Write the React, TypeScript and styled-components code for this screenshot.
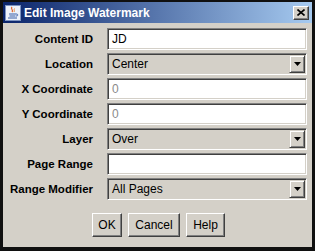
import React from 'react';
import styled, { createGlobalStyle } from 'styled-components';

const GlobalStyle = createGlobalStyle`
  html, body {
    margin: 0;
    padding: 0;
    background: #d4d0c8;
  }
  * { box-sizing: border-box; }
`

const Frame = styled.div`
  width: 315px;
  height: 251px;
  background: #d4d0c8;
  border-style: solid;
  border-color: #101010;
  border-width: 2px 3px 4px 3px;
  display: flex;
  flex-direction: column;
  font-family: "Liberation Sans", Arial, sans-serif;
`

const TitleBar = styled.div`
  height: 21px;
  display: flex;
  align-items: center;
  padding: 0 3px 0 2px;
  background: linear-gradient(to right, #0a246a, #a6caf0);
`

const TitleText = styled.span`
  flex: 1;
  margin-left: 3px;
  color: #fff;
  font-weight: bold;
  font-size: 12px;
`

const CloseButton = styled.div`
  width: 16px;
  height: 14px;
  background: #d4d0c8;
  border: 1px solid;
  border-color: #fff #404040 #404040 #fff;
  box-shadow: inset -1px -1px #808080;
  display: flex;
  align-items: center;
  justify-content: center;
`

const Form = styled.div`
  display: grid;
  grid-template-columns: 85px 200px;
  column-gap: 14px;
  row-gap: 3px;
  grid-auto-rows: 22px;
  padding: 5px 5px 0 5px;
`

const Label = styled.div`
  display: flex;
  align-items: center;
  justify-content: flex-end;
  font-size: 11.5px;
  font-weight: bold;
  color: #000;
  white-space: nowrap;
`

const Field = styled.div<{ $combo?: boolean; $dim?: boolean }>`
  display: flex;
  align-items: center;
  padding-left: 3px;
  background: ${(p) => (p.$combo ? '#d4d0c8' : '#fff')};
  border: 1px solid;
  border-color: #808080 #fff #fff #808080;
  box-shadow: inset 1px 1px #404040, inset -1px -1px #d4d0c8;
  font-size: 12px;
  color: ${(p) => (p.$dim ? '#8a8a8a' : '#000')};
`

const FieldText = styled.span`
  flex: 1;
  margin-left: 1px;
`

const ArrowButton = styled.div`
  width: 16px;
  height: 18px;
  margin-right: 1px;
  background: #d4d0c8;
  border: 1px solid;
  border-color: #d4d0c8 #404040 #404040 #d4d0c8;
  box-shadow: inset 1px 1px #fff, inset -1px -1px #808080;
  display: flex;
  align-items: center;
  justify-content: center;
`

const ButtonRow = styled.div`
  display: flex;
  justify-content: center;
  gap: 6px;
  margin-top: 13px;
  padding-left: 2px;
`

const Button = styled.div<{ $w: number }>`
  width: ${(p) => p.$w}px;
  height: 24px;
  display: flex;
  align-items: center;
  justify-content: center;
  background: #d4d0c8;
  border: 1px solid;
  border-color: #fff #404040 #404040 #fff;
  box-shadow: inset -1px -1px #808080;
  font-size: 12px;
  color: #000;
`

const JavaIcon = () => (
  <svg width="16" height="16" viewBox="0 0 16 16">
    <rect x="0.5" y="0.5" width="15" height="15" fill="#eef2fa" stroke="#7d93c0" />
    <path d="M7 2 C5 4 9 5 7 7" stroke="#e0602a" strokeWidth="1.2" fill="none" />
    <path d="M9.5 3.5 C8.5 5 10 5.5 9 7" stroke="#e89040" strokeWidth="1" fill="none" />
    <path d="M4 9 H11 M4.5 11 H10.5 M3 13 H12" stroke="#3a5ea8" strokeWidth="1" />
    <path d="M11 9 C13.5 9 13.5 11 11 11" stroke="#3a5ea8" strokeWidth="1" fill="none" />
  </svg>
)

const CloseGlyph = () => (
  <svg width="8" height="7" viewBox="0 0 8 7">
    <path d="M0.5 0.5 L7.5 6.5 M7.5 0.5 L0.5 6.5" stroke="#000" strokeWidth="1.6" />
  </svg>
)

const DownArrow = () => (
  <svg width="7" height="4" viewBox="0 0 7 4">
    <path d="M0 0 H7 L3.5 4 Z" fill="#000" />
  </svg>
)

interface Row {
  label: string
  value: string
  combo?: boolean
  dim?: boolean
}

const rows: Row[] = [
  { label: 'Content ID', value: 'JD' },
  { label: 'Location', value: 'Center', combo: true },
  { label: 'X Coordinate', value: '0', dim: true },
  { label: 'Y Coordinate', value: '0', dim: true },
  { label: 'Layer', value: 'Over', combo: true },
  { label: 'Page Range', value: '' },
  { label: 'Range Modifier', value: 'All Pages', combo: true },
]

export default function App() {
  return (
    <>
      <GlobalStyle />
      <Frame>
        <TitleBar>
          <JavaIcon />
          <TitleText>Edit Image Watermark</TitleText>
          <CloseButton>
            <CloseGlyph />
          </CloseButton>
        </TitleBar>
        <Form>
          {rows.map((r) => (
            <React.Fragment key={r.label}>
              <Label>{r.label}</Label>
              <Field $combo={r.combo} $dim={r.dim}>
                <FieldText>{r.value}</FieldText>
                {r.combo && (
                  <ArrowButton>
                    <DownArrow />
                  </ArrowButton>
                )}
              </Field>
            </React.Fragment>
          ))}
        </Form>
        <ButtonRow>
          <Button $w={30}>OK</Button>
          <Button $w={52}>Cancel</Button>
          <Button $w={39}>Help</Button>
        </ButtonRow>
      </Frame>
    </>
  )
}
